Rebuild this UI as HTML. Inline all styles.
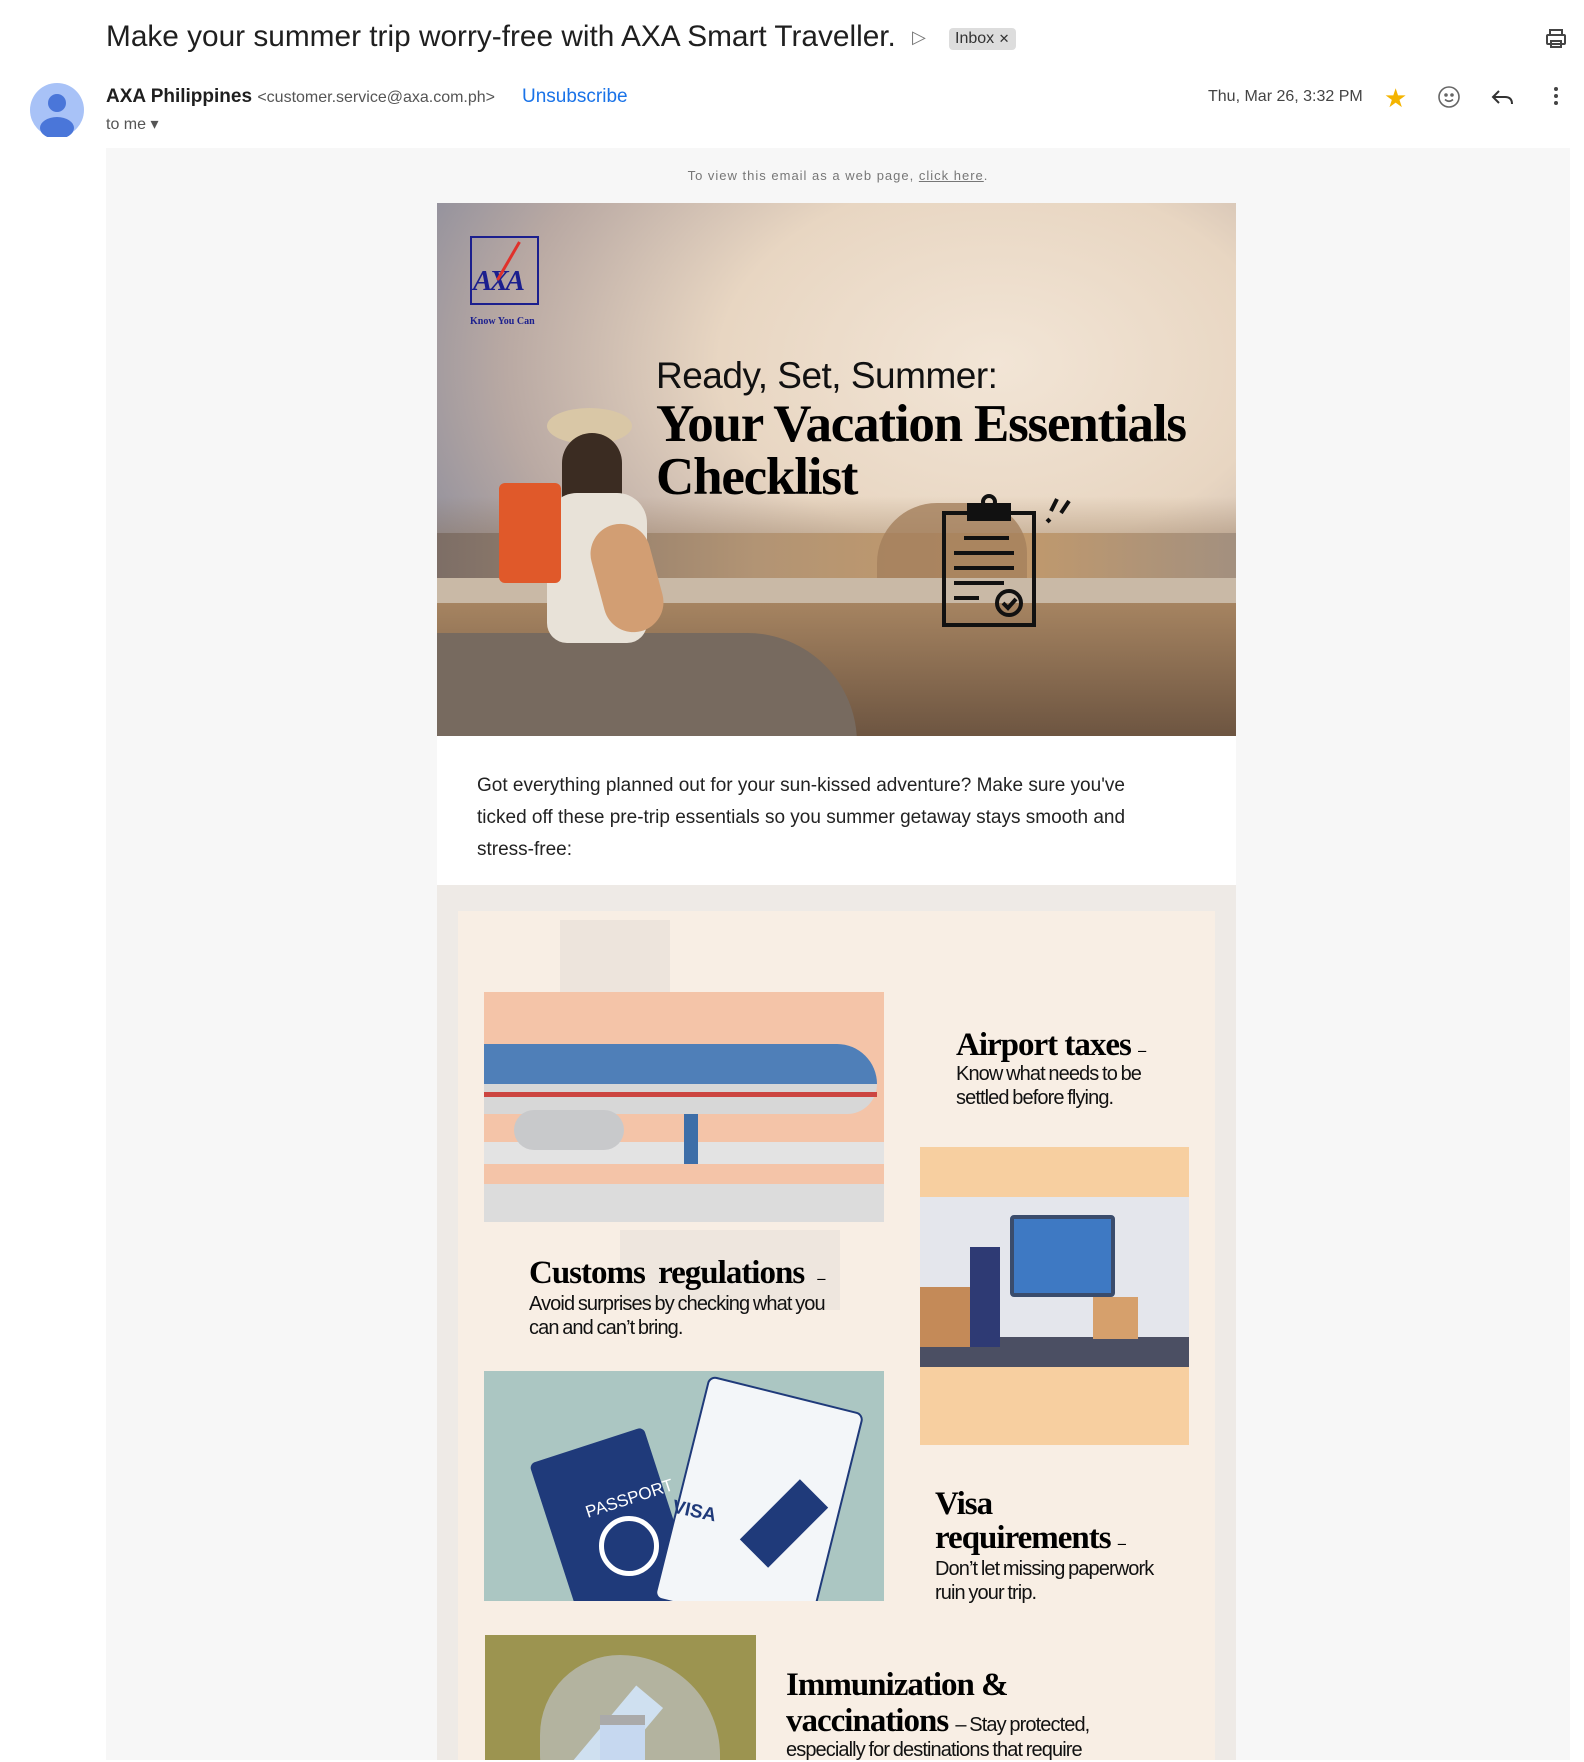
<!DOCTYPE html>
<html><head><meta charset="utf-8"><style>
*{margin:0;padding:0;box-sizing:border-box}
body{width:1584px;height:1760px;background:#fff;font-family:"Liberation Sans",Arial,sans-serif;position:relative;overflow:hidden;color:#202124}
.a{position:absolute}
.serif{font-family:"Liberation Serif",serif;font-weight:bold;color:#000}
.cond{font-family:"Liberation Sans",sans-serif;color:#111;letter-spacing:-0.9px;word-spacing:-1px}
</style></head><body>
<div class="a" style="left:106px;top:20px;font-size:29.8px;color:#1f1f1f;white-space:nowrap">Make your summer trip worry-free with AXA Smart Traveller.</div>
<div class="a" style="left:912px;top:27px;font-size:18px;color:#777">&#x25B7;</div>
<div class="a" style="left:949px;top:28px;background:#ddd;border-radius:4px;padding:2px 6px;font-size:16px;color:#333">Inbox <span style="font-size:13px">✕</span></div>
<svg class="a" style="left:1544px;top:27px" width="24" height="24" viewBox="0 0 24 24" fill="none" stroke="#444" stroke-width="2"><rect x="6" y="3" width="12" height="5"/><rect x="3" y="8" width="18" height="9" rx="1"/><rect x="7" y="14" width="10" height="6"/></svg>
<svg class="a" style="left:30px;top:83px" width="54" height="54" viewBox="0 0 54 54"><circle cx="27" cy="27" r="27" fill="#a8c2f7"/><circle cx="27" cy="20" r="9" fill="#4a76d9"/><ellipse cx="27" cy="45" rx="17" ry="11" fill="#4a76d9"/></svg>
<div class="a" style="left:106px;top:86px;font-size:19px;white-space:nowrap"><b style="color:#1f1f1f">AXA Philippines</b> <span style="font-size:16px;color:#555">&lt;customer.service@axa.com.ph&gt;</span></div>
<div class="a" style="left:522px;top:86px;font-size:19px;color:#1a73e8">Unsubscribe</div>
<div class="a" style="left:106px;top:114px;font-size:16px;color:#555">to me ▾</div>
<div class="a" style="left:1208px;top:88px;font-size:16px;color:#444">Thu, Mar 26, 3:32 PM</div>
<div class="a" style="left:1384px;top:83px;font-size:26px;color:#f4b400">★</div>
<svg class="a" style="left:1437px;top:85px" width="24" height="24" viewBox="0 0 24 24" fill="none" stroke="#666" stroke-width="1.6"><circle cx="12" cy="12" r="10"/><circle cx="9" cy="10" r="1" fill="#666"/><circle cx="15" cy="10" r="1" fill="#666"/><path d="M8 14.5q4 3.5 8 0"/></svg>
<svg class="a" style="left:1490px;top:85px" width="26" height="24" viewBox="0 0 26 24" fill="none" stroke="#333" stroke-width="2"><path d="M9 6L3 12l6 6M3 12h12q7 0 7 7"/></svg>
<div class="a" style="left:1554px;top:87px;width:4px;height:4px;border-radius:2px;background:#444;box-shadow:0 7px #444,0 14px #444"></div>

<div class="a" style="left:106px;top:148px;width:1464px;height:1612px;background:#f7f7f7"></div>
<div class="a" style="left:106px;top:168px;width:1464px;text-align:center;font-size:13px;letter-spacing:1px;color:#777">To view this email as a web page, <u>click here</u>.</div>

<div class="a" style="left:437px;top:203px;width:799px;height:1557px;background:#fff"></div>
<!-- hero -->
<div class="a" style="left:437px;top:203px;width:799px;height:533px;overflow:hidden;background:linear-gradient(180deg,rgba(0,0,0,0) 55%,#8a6a48 78%,#5b4736 100%),radial-gradient(ellipse at 70% 30%,#f2e5d6 0%,#e8d6c2 35%,#b9a9a3 62%,#5f7195 100%)">
 <div class="a" style="left:0;top:330px;width:799px;height:50px;background:linear-gradient(90deg,#7d6e66,#b29474 40%,#c49a6a 70%,#a3907f)"></div>
 <div class="a" style="left:440px;top:300px;width:150px;height:80px;background:#a47f5c;border-radius:60px 50px 0 0;opacity:.8"></div>
 <div class="a" style="left:0;top:375px;width:799px;height:30px;background:#c9b9a6"></div>
 <div class="a" style="left:0;top:400px;width:799px;height:133px;background:linear-gradient(180deg,#a68461,#6d5541)"></div>
 <div class="a" style="left:0;top:430px;width:420px;height:110px;background:#776a5f;border-radius:0 200px 0 0"></div>
 <div class="a" style="left:110px;top:205px;width:85px;height:36px;background:#d9c7a6;border-radius:50%"></div>
 <div class="a" style="left:125px;top:230px;width:60px;height:120px;background:#3b2c22;border-radius:30px 30px 10px 10px"></div>
 <div class="a" style="left:110px;top:290px;width:100px;height:150px;background:#e8e2d8;border-radius:30px 30px 20px 20px"></div>
 <div class="a" style="left:62px;top:280px;width:62px;height:100px;background:#e0592a;border-radius:6px"></div>
 <div class="a" style="left:160px;top:320px;width:60px;height:110px;background:#d29e73;border-radius:30px;transform:rotate(-15deg)"></div>
 <div class="a" style="left:33px;top:33px;width:69px;height:69px;border:2px solid #1b1f8e"></div>
 <div class="a serif" style="left:36px;top:62px;font-size:29px;color:#1b1f8e;font-style:italic;letter-spacing:-3px">AXA</div>
 <div class="a" style="left:70px;top:36px;width:3px;height:44px;background:#e0312b;transform:rotate(30deg)"></div>
 <div class="a serif" style="left:33px;top:113px;font-size:10px;color:#1b1f8e">Know You Can</div>
 <div class="a" style="left:219px;top:152px;font-size:37px;color:#111;white-space:nowrap;letter-spacing:-0.5px">Ready, Set, Summer:</div>
 <div class="a serif" style="left:219px;top:195px;font-size:53px;line-height:53px;white-space:nowrap;letter-spacing:-1.2px">Your Vacation Essentials<br>Checklist</div>
 <svg class="a" style="left:502px;top:290px" width="140" height="140" viewBox="0 0 140 140" fill="none" stroke="#111" stroke-width="4"><rect x="5" y="20" width="90" height="112"/><rect x="30" y="12" width="40" height="14" fill="#111"/><circle cx="50" cy="9" r="6"/><path d="M25 45h45M15 60h60M15 75h60M15 90h50M15 105h25"/><circle cx="70" cy="110" r="12"/><path d="M64 110l5 5 8-9"/><path d="M112 18l6-12M122 20l8-12M108 26l3 3"/></svg>
</div>
<div class="a" style="left:477px;top:770px;width:690px;font-size:19px;line-height:32px;color:#222">Got everything planned out for your sun-kissed adventure? Make sure you've ticked off these pre-trip essentials so you summer getaway stays smooth and stress-free:</div>

<!-- infographic -->
<div class="a" style="left:437px;top:885px;width:799px;height:875px;background:#eeeae6"></div>
<div class="a" style="left:458px;top:911px;width:757px;height:849px;background:#f8eee4"></div>
<div class="a" style="left:560px;top:920px;width:110px;height:260px;background:#e8e0d8;opacity:.7"></div>
<div class="a" style="left:620px;top:1230px;width:220px;height:80px;background:#ebe3dc;opacity:.8"></div>

<div class="a" style="left:484px;top:992px;width:400px;height:230px;background:#dcdcdc;overflow:hidden">
 <div class="a" style="left:0;top:0;width:400px;height:192px;background:#f4c4a8"></div>
 <div class="a" style="left:0;top:150px;width:400px;height:22px;background:#e3e3e3"></div>
 <div class="a" style="left:0;top:52px;width:393px;height:40px;background:#4f7fb8;border-radius:0 60px 0 0"></div>
 <div class="a" style="left:0;top:92px;width:393px;height:30px;background:#d7d7d7;border-radius:0 0 60px 0"></div>
 <div class="a" style="left:0;top:100px;width:393px;height:5px;background:#cc4540"></div>
 <div class="a" style="left:30px;top:118px;width:110px;height:40px;background:#c8c9cb;border-radius:20px"></div>
 <div class="a" style="left:200px;top:122px;width:14px;height:50px;background:#3d6ea8"></div>
</div>
<div class="a serif" style="left:956px;top:1027px;font-size:33px;letter-spacing:-1px">Airport taxes <span style="font-size:16px">–</span></div>
<div class="a cond" style="left:956px;top:1062px;font-size:20px;line-height:24px">Know what needs to be<br>settled before flying.</div>

<div class="a" style="left:920px;top:1147px;width:269px;height:298px;background:#f7cfa0;overflow:hidden">
 <div class="a" style="left:0;top:50px;width:269px;height:170px;background:#e4e6ec"></div>
 <div class="a" style="left:0;top:190px;width:269px;height:30px;background:#4b4f63"></div>
 <div class="a" style="left:90px;top:68px;width:105px;height:82px;background:#3e79c3;border:4px solid #3a4c6c;border-radius:4px"></div>
 <div class="a" style="left:50px;top:100px;width:30px;height:100px;background:#2e3a74"></div>
 <div class="a" style="left:0;top:140px;width:50px;height:60px;background:#c48a58"></div>
 <div class="a" style="left:173px;top:150px;width:45px;height:42px;background:#d6a06c"></div>
</div>
<div class="a serif" style="left:529px;top:1255px;font-size:33px;letter-spacing:-1px;word-spacing:6px">Customs regulations <span style="font-size:16px">–</span></div>
<div class="a cond" style="left:529px;top:1292px;font-size:20px;line-height:24px">Avoid surprises by checking what you<br>can and can’t bring.</div>

<div class="a" style="left:484px;top:1371px;width:400px;height:230px;background:#abc6c2;overflow:hidden">
 <div class="a" style="left:70px;top:70px;width:120px;height:180px;background:#1f3a7a;border-radius:6px;transform:rotate(-18deg)"></div>
 <div class="a" style="left:100px;top:118px;font-size:17px;color:#fff;transform:rotate(-18deg)">PASSPORT</div>
 <div class="a" style="left:115px;top:145px;width:60px;height:60px;border:5px solid #fff;border-radius:50%"></div>
 <div class="a" style="left:195px;top:20px;width:160px;height:230px;background:#f3f6f9;border:2px solid #1f3a7a;border-radius:8px;transform:rotate(14deg)"></div>
 <div class="a" style="left:188px;top:130px;font-size:19px;color:#1f3a7a;font-weight:bold;transform:rotate(12deg)">VISA</div>
 <div class="a" style="left:280px;top:110px;width:40px;height:85px;background:#1f3a7a;transform:rotate(45deg)"></div>
</div>
<div class="a serif" style="left:935px;top:1487px;font-size:33px;line-height:34px;letter-spacing:-1px">Visa<br>requirements <span style="font-size:16px">–</span></div>
<div class="a cond" style="left:935px;top:1557px;font-size:20px;line-height:24px">Don’t let missing paperwork<br>ruin your trip.</div>

<div class="a" style="left:485px;top:1635px;width:271px;height:125px;background:#9c9450;overflow:hidden">
 <div class="a" style="left:55px;top:20px;width:180px;height:160px;background:#b3b39f;border-radius:80px 100px 40px 60px"></div>
 <div class="a" style="left:115px;top:50px;width:35px;height:100px;background:#cfe0f0;transform:rotate(40deg)"></div>
 <div class="a" style="left:115px;top:80px;width:45px;height:60px;background:#c6d8f0;border-top:10px solid #aaa"></div>
</div>
<div class="a serif" style="left:786px;top:1667px;font-size:33px;line-height:36px;letter-spacing:-1px;white-space:nowrap">Immunization &amp;<br>vaccinations <span class="cond" style="font-weight:normal;font-size:20px">– Stay protected,</span></div>
<div class="a cond" style="left:786px;top:1738px;font-size:20px;line-height:24px;white-space:nowrap">especially for destinations that require</div>
</body></html>
